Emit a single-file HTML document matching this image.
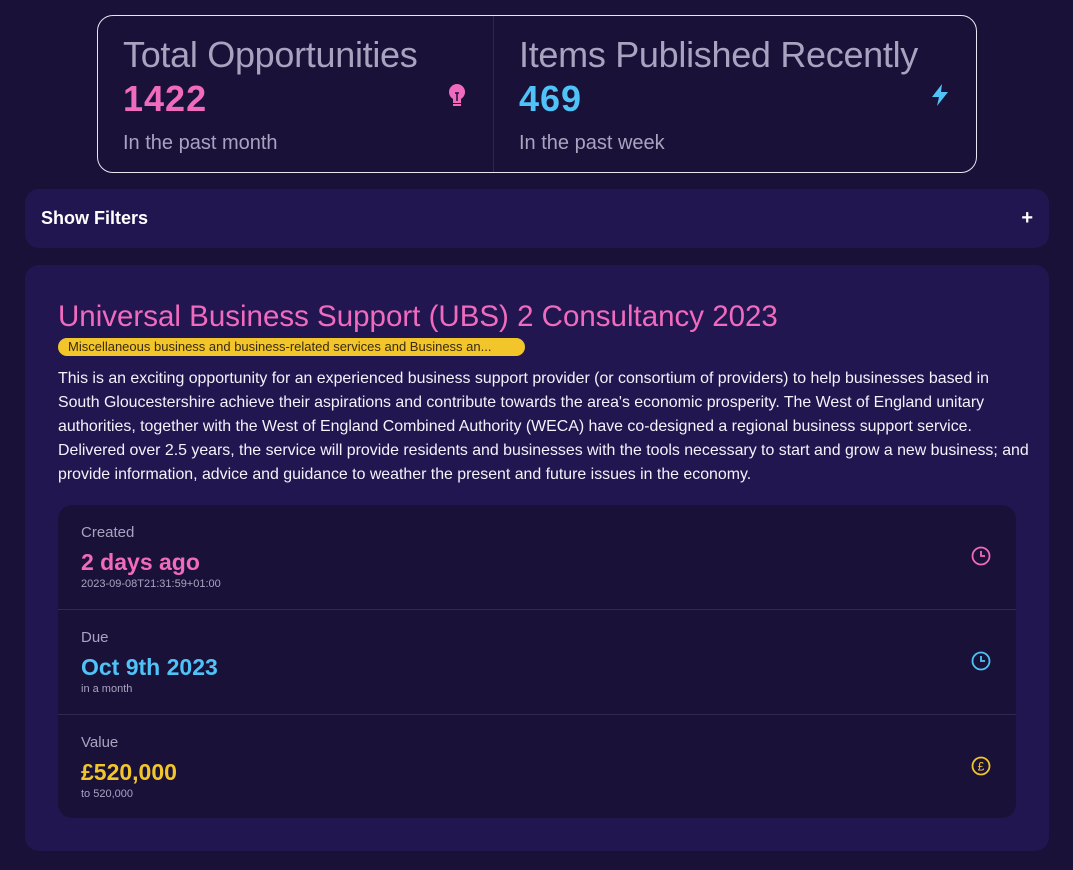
<!DOCTYPE html>
<html><head><meta charset="utf-8"><style>
*{box-sizing:border-box;margin:0;padding:0}
body{width:1073px;height:870px;background:#1a1139;font-family:"Liberation Sans",sans-serif;color:#fff;position:relative;overflow:hidden}
.stats{position:absolute;left:97px;top:15px;width:880px;height:158px;border:1px solid #e8e6f0;border-radius:16px;display:flex}
.stat{position:relative;padding:18px 25px}
.stat+.stat{border-left:1px solid #2e2650}
.t{font-size:36px;color:#a9a3c0;line-height:42px;letter-spacing:-0.3px;white-space:nowrap}
.v{font-size:36px;font-weight:bold;line-height:40px;margin-top:3px;letter-spacing:1px}
.d{font-size:20px;color:#a9a3c0;margin-top:13px}
.ic{position:absolute;right:24px;top:67px}
.filt{position:absolute;left:25px;top:189px;width:1024px;height:59px;background:#221650;border-radius:14px;padding:0 16px;display:flex;align-items:center;justify-content:space-between;font-weight:bold;font-size:18px}
.main{position:absolute;left:25px;top:265px;width:1024px;height:586px;background:#221650;border-radius:14px;padding:0 33px}
h1{font-size:29.5px;font-weight:normal;color:#f06bbd;margin-top:34px;line-height:36px}
.tag{display:inline-block;background:#f2c62a;color:#3a2a10;font-size:13px;border-radius:10px;padding:2px 10px;margin-top:3px;line-height:14px;width:467px;white-space:nowrap;overflow:hidden}
p{font-size:15.9px;line-height:24px;margin-top:6px;color:#f4f2fa;white-space:nowrap}
.card{position:absolute;left:33px;top:240px;width:958px;height:313px;background:#1a1139;border-radius:14px}
.row{height:105px;position:relative;padding:19px 23px;border-bottom:1px solid #302855}
.row:last-child{border:none}
.l{color:#a9a3c0;font-size:15px}
.big{font-size:23px;font-weight:bold;margin-top:7px;line-height:28px}
.s{font-size:11px;color:#a9a3c0;margin-top:2px}
.row svg{position:absolute;right:25px;top:41px}
</style></head><body>
<div class="stats">
<div class="stat" style="width:395px"><div class="t">Total Opportunities</div><div class="v" style="color:#f06bbd">1422</div><div class="d">In the past month</div>
<svg class="ic" style="right:26px;top:67px" width="20" height="26" viewBox="0 0 20 26"><circle cx="10" cy="9" r="8" fill="#f06bbd"/><rect x="6" y="14" width="8" height="6" fill="#f06bbd"/><rect x="6" y="21" width="8" height="2" fill="#f06bbd"/><path d="M8 10h4M10 10v8" stroke="#1a1139" stroke-width="1.5"/></svg></div>
<div class="stat" style="flex:1"><div class="t">Items Published Recently</div><div class="v" style="color:#4fc3f7">469</div><div class="d">In the past week</div>
<svg class="ic" style="right:26px;top:68px" width="20" height="22" viewBox="0 0 20 22"><path d="M12 0L2 13h7l-2 9L18 8h-7z" fill="#4fc3f7"/></svg></div>
</div>
<div class="filt"><span>Show Filters</span><span style="font-size:20px">+</span></div>
<div class="main">
<h1>Universal Business Support (UBS) 2 Consultancy 2023</h1>
<div class="tag">Miscellaneous business and business-related services and Business an...</div>
<p>This is an exciting opportunity for an experienced business support provider (or consortium of providers) to help businesses based in<br>South Gloucestershire achieve their aspirations and contribute towards the area's economic prosperity. The West of England unitary<br>authorities, together with the West of England Combined Authority (WECA) have co-designed a regional business support service.<br>Delivered over 2.5 years, the service will provide residents and businesses with the tools necessary to start and grow a new business; and<br>provide information, advice and guidance to weather the present and future issues in the economy.</p>
<div class="card">
<div class="row"><div class="l">Created</div><div class="big" style="color:#f06bbd">2 days ago</div><div class="s">2023-09-08T21:31:59+01:00</div>
<svg width="20" height="20" viewBox="0 0 20 20"><circle cx="10" cy="10" r="8.5" fill="none" stroke="#f06bbd" stroke-width="1.8"/><path d="M10 5v5h4" fill="none" stroke="#f06bbd" stroke-width="1.8"/></svg></div>
<div class="row"><div class="l">Due</div><div class="big" style="color:#4fc3f7">Oct 9th 2023</div><div class="s">in a month</div>
<svg width="20" height="20" viewBox="0 0 20 20"><circle cx="10" cy="10" r="8.5" fill="none" stroke="#4fc3f7" stroke-width="1.8"/><path d="M10 5v5h4" fill="none" stroke="#4fc3f7" stroke-width="1.8"/></svg></div>
<div class="row"><div class="l">Value</div><div class="big" style="color:#f2c62a">£520,000</div><div class="s">to 520,000</div>
<svg width="20" height="20" viewBox="0 0 20 20"><circle cx="10" cy="10" r="8.5" fill="none" stroke="#f2c62a" stroke-width="1.8"/><text x="10" y="14.5" text-anchor="middle" font-size="12" font-family="Liberation Sans" fill="#f2c62a">£</text></svg></div>
</div>
</div>
</body></html>
